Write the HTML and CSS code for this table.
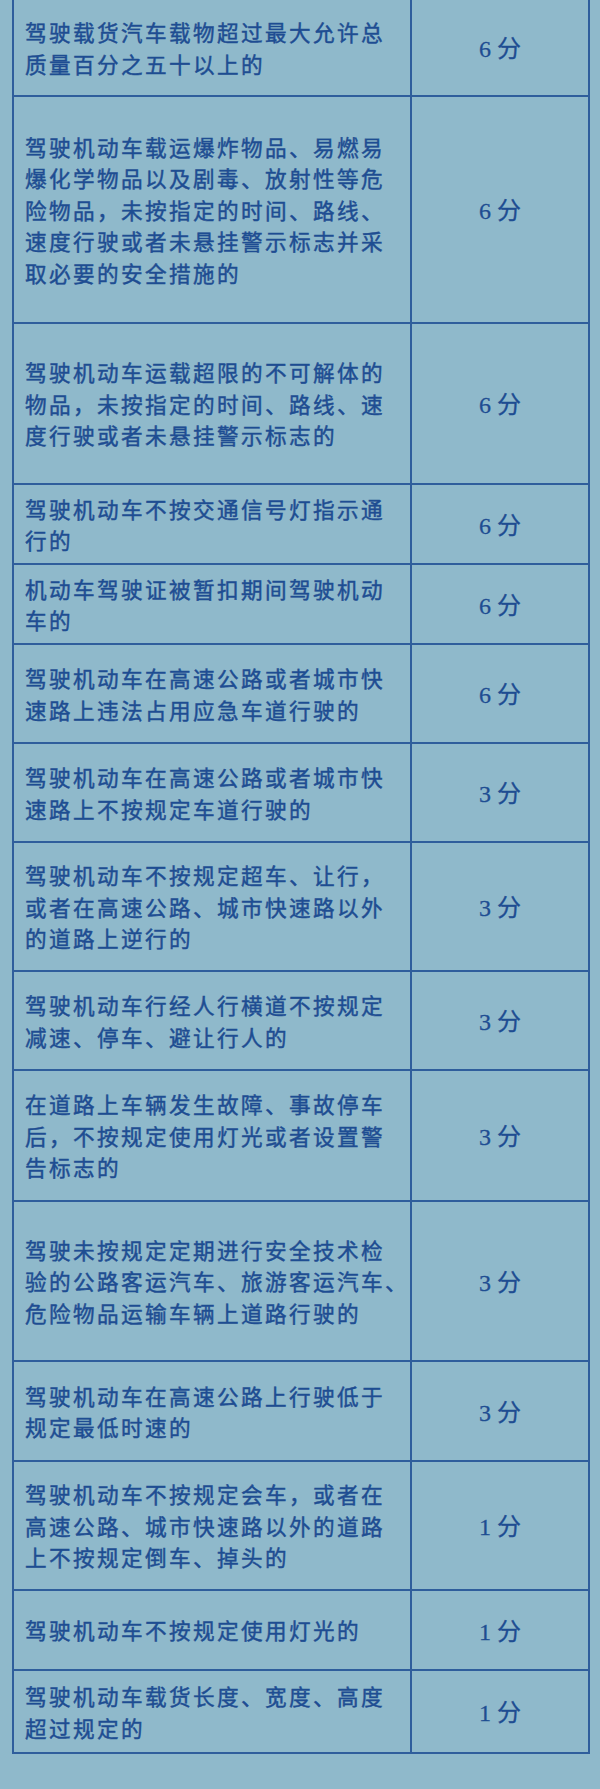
FILE: index.html
```html
<!DOCTYPE html>
<html lang="zh-CN">
<head>
<meta charset="utf-8">
<title>记分标准</title>
<link rel="stylesheet" href="styles.css">
</head>
<body>
<div class="table">
  <div class="row h97"><div class="desc">驾驶载货汽车载物超过最大允许总<br>质量百分之五十以上的</div><div class="score">6 分</div></div>
  <div class="row h227"><div class="desc">驾驶机动车载运爆炸物品、易燃易<br>爆化学物品以及剧毒、放射性等危<br>险物品，未按指定的时间、路线、<br>速度行驶或者未悬挂警示标志并采<br>取必要的安全措施的</div><div class="score">6 分</div></div>
  <div class="row h161"><div class="desc">驾驶机动车运载超限的不可解体的<br>物品，未按指定的时间、路线、速<br>度行驶或者未悬挂警示标志的</div><div class="score">6 分</div></div>
  <div class="row h80"><div class="desc">驾驶机动车不按交通信号灯指示通<br>行的</div><div class="score">6 分</div></div>
  <div class="row h80"><div class="desc">机动车驾驶证被暂扣期间驾驶机动<br>车的</div><div class="score">6 分</div></div>
  <div class="row h99"><div class="desc">驾驶机动车在高速公路或者城市快<br>速路上违法占用应急车道行驶的</div><div class="score">6 分</div></div>
  <div class="row h99"><div class="desc">驾驶机动车在高速公路或者城市快<br>速路上不按规定车道行驶的</div><div class="score">3 分</div></div>
  <div class="row h129"><div class="desc">驾驶机动车不按规定超车、让行，<br>或者在高速公路、城市快速路以外<br>的道路上逆行的</div><div class="score">3 分</div></div>
  <div class="row h99"><div class="desc">驾驶机动车行经人行横道不按规定<br>减速、停车、避让行人的</div><div class="score">3 分</div></div>
  <div class="row h131"><div class="desc">在道路上车辆发生故障、事故停车<br>后，不按规定使用灯光或者设置警<br>告标志的</div><div class="score">3 分</div></div>
  <div class="row h160"><div class="desc">驾驶未按规定定期进行安全技术检<br>验的公路客运汽车、旅游客运汽车、<br>危险物品运输车辆上道路行驶的</div><div class="score">3 分</div></div>
  <div class="row h100"><div class="desc">驾驶机动车在高速公路上行驶低于<br>规定最低时速的</div><div class="score">3 分</div></div>
  <div class="row h129"><div class="desc">驾驶机动车不按规定会车，或者在<br>高速公路、城市快速路以外的道路<br>上不按规定倒车、掉头的</div><div class="score">1 分</div></div>
  <div class="row h80"><div class="desc">驾驶机动车不按规定使用灯光的</div><div class="score">1 分</div></div>
  <div class="row h83"><div class="desc">驾驶机动车载货长度、宽度、高度<br>超过规定的</div><div class="score">1 分</div></div>
</div>
</body>
</html>
```
FILE: styles.css
```css
html, body {
  margin: 0;
  padding: 0;
  background: #8fb9cb;
}
body {
  height: 1789px;
  overflow: hidden;
  font-family: "Noto Sans CJK SC", "Noto Sans", sans-serif;
  color: #1e4d92;
}
.table {
  margin-left: 12px;
  width: 578px;
  box-sizing: border-box;
  border-left: 2px solid #2f5e9c;
  border-right: 2px solid #2f5e9c;
}
.row {
  display: grid;
  grid-template-columns: 398px 176px;
  box-sizing: border-box;
  border-bottom: 2px solid #2f5e9c;
}
.desc {
  box-sizing: border-box;
  border-right: 2px solid #2f5e9c;
  padding-left: 11px;
  display: flex;
  align-items: center;
  font-size: 21.6px;
  letter-spacing: 2.4px;
  line-height: 31.4px;
  font-weight: 400;
  -webkit-text-stroke: 0.45px currentColor;
  white-space: nowrap;
}
.score {
  display: flex;
  align-items: center;
  justify-content: center;
  font-family: "Liberation Serif", "Noto Sans CJK SC", serif;
  font-size: 24px;
  font-weight: 400;
  -webkit-text-stroke: 0.3px currentColor;
  padding-bottom: 2px;
}
.h80 { height: 80px; }
.h83 { height: 83px; }
.h97 { height: 97px; }
.h99 { height: 99px; }
.h100 { height: 100px; }
.h129 { height: 129px; }
.h131 { height: 131px; }
.h160 { height: 160px; }
.h161 { height: 161px; }
.h227 { height: 227px; }
```
